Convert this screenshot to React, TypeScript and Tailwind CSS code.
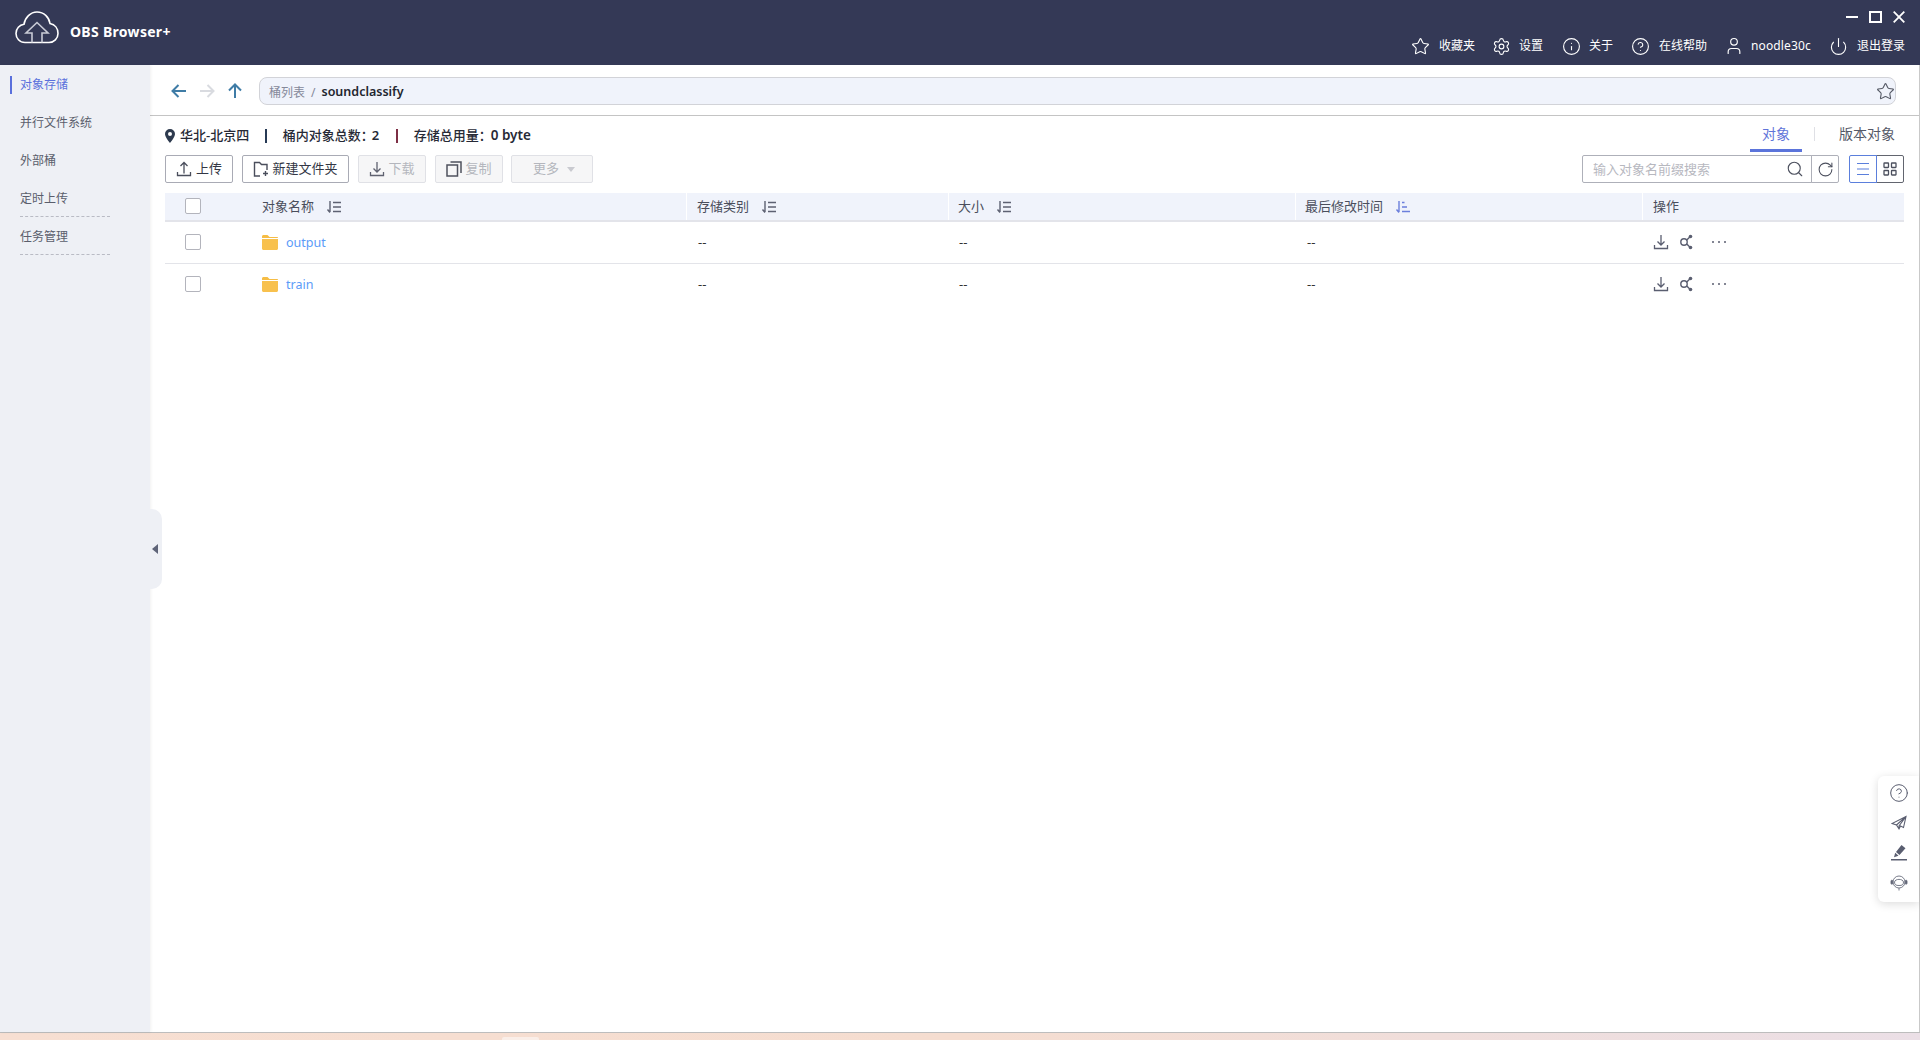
import { Star, Settings, Info, CircleHelp, User, Power, Search, RotateCw } from "lucide-react";

function SortIcon({ active }: { active?: boolean }) {
  const c = active ? "#6b7fdc" : "#5d6172";
  return (
    <svg width="16" height="14" viewBox="0 0 16 14" fill="none" stroke={c} strokeWidth="1.4">
      <path d="M4 1v11M1.5 9.5 4 12.5" />
      {active ? (
        <path d="M7 2.5h2.5M7 7h5M7 11.5h8" />
      ) : (
        <path d="M7 2.5h8M7 7h8M7 11.5h8" />
      )}
    </svg>
  );
}

function Folder() {
  return (
    <svg width="16" height="15" viewBox="0 0 16 15">
      <path d="M0 1.5C0 .7.7 0 1.5 0h4L7.5 2H15c.6 0 1 .4 1 1H0z" fill="#f6bd45" />
      <path d="M0 4h16v9.5c0 .8-.7 1.5-1.5 1.5h-13C.7 15 0 14.300 0 13.500z" fill="#f8c14e" />
    </svg>
  );
}

function DownloadIcon({ size = 16, color = "#5a5e70" }: { size?: number; color?: string }) {
  return (
    <svg width={size} height={size} viewBox="0 0 16 16" fill="none" stroke={color} strokeWidth="1.3">
      <path d="M8 1v10M4.500 7.500 8 11l3.500-3.500M1.500 11v3.500h13V11" />
    </svg>
  );
}

function ShareIcon() {
  return (
    <svg width="14" height="16" viewBox="0 0 14 16" fill="none" stroke="#5a5e70" strokeWidth="1.4">
      <circle cx="5" cy="8" r="3.200" />
      <path d="M7.800 6 11 2.800M7.800 10 11 13.200" />
      <circle cx="11.500" cy="2.500" r="1.800" fill="#5a5e70" stroke="none" />
      <circle cx="11.500" cy="13.500" r="1.800" fill="#5a5e70" stroke="none" />
    </svg>
  );
}

function NavItem({
  icon,
  label,
  className,
  labelClass = "",
}: {
  icon: React.ReactNode;
  label: string;
  className: string;
  labelClass?: string;
}) {
  return (
    <div className={"flex items-center " + className}>
      {icon}
      <span className={"text-[12px] leading-none text-white " + labelClass}>{label}</span>
    </div>
  );
}

function ToolButton({
  icon,
  label,
  className,
  disabled,
}: {
  icon?: React.ReactNode;
  label: string;
  className: string;
  disabled?: boolean;
}) {
  return (
    <button
      className={
        "h-7 flex items-center justify-center gap-[3px] rounded-[2px] border text-[13px] " +
        (disabled
          ? "bg-[#f6f6f7] border-[#e0e1e6] text-[#b4b6bd] "
          : "bg-white border-[#a9abb5] text-[#333745] ") +
        className
      }
    >
      {icon}
      <span>{label}</span>
    </button>
  );
}

const columns = "grid grid-cols-[86px_435px_262px_347px_347px_262px]";

function HeadCell({
  label,
  active,
  className = "border-white pl-[10px]",
}: {
  label: string;
  active?: boolean;
  className?: string;
}) {
  return (
    <div className={"flex items-center border-l text-[13px] text-[#4a4e5c] " + className}>
      <span>{label}</span>
      <span className="ml-3 flex">
        <SortIcon active={active} />
      </span>
    </div>
  );
}

function Row({ name }: { name: string }) {
  return (
    <div className={columns + " h-[42px] last:h-[41px] items-center text-[13px] text-[#333] border-b border-[#e3e4e9] last:border-b-0"}>
      <div className="pl-[20px] pb-[2px]">
        <div className="w-4 h-4 rounded-[2px] border border-[#b3b4bc] bg-white" />
      </div>
      <div className="flex items-center gap-2 pl-[11px]">
        <span className="flex pb-[1px]">
          <Folder />
        </span>
        <a className="pt-[1px] text-[12.500px] text-[#5b9bf8]">{name}</a>
      </div>
      <div className="pl-[12px] pt-[1px]">--</div>
      <div className="pl-[11px] pt-[1px]">--</div>
      <div className="pl-[12px] pt-[1px]">--</div>
      <div className="flex items-center pl-[11px] pb-[1px]">
        <DownloadIcon />
        <span className="ml-[10px] flex">
          <ShareIcon />
        </span>
        <span className="ml-[19px] flex gap-[4px]">
          <i className="w-[2px] h-[2px] bg-[#5a5e70] rounded-full" />
          <i className="w-[2px] h-[2px] bg-[#5a5e70] rounded-full" />
          <i className="w-[2px] h-[2px] bg-[#5a5e70] rounded-full" />
        </span>
      </div>
    </div>
  );
}

export default function App() {
  const sideItems = ["对象存储", "并行文件系统", "外部桶", "定时上传", "任务管理"];
  return (
    <div className="relative w-[1920px] h-[1040px] overflow-hidden flex flex-col bg-white font-['Noto_Sans','Noto_Sans_CJK_SC',sans-serif]">
      {/* title bar */}
      <header className="h-[65px] shrink-0 bg-[#343956] flex items-start justify-between">
        <div className="flex items-start pl-[15px] pt-[11px]">
          <svg width="44" height="33" viewBox="0 0 44 33" fill="none" stroke="#fff" strokeWidth="1.600">
            <path d="M10 31.500C4.500 31.500 1 27 1 22.500 1 17.500 4.500 14 9 13.300 10 6.500 15.500 1 22 1c7 0 12 5 13 11.500 5 1 8 5 8 10 0 5-4 9-9 9z" />
            <path d="M17 31.500V22h-6l11-10.500L33 22h-6v9.500" stroke="#c9cbd6" />
          </svg>
          <span className="ml-[11px] mt-[14px] text-[14px] font-bold tracking-[0.3px] text-white leading-none">OBS Browser+</span>
        </div>
        <div className="flex flex-col items-end pr-[15px]">
          <div className="flex items-center h-[34px] gap-[11px]">
            <i className="w-3 h-[2px] bg-white" />
            <i className="w-[13px] h-[12px] border-2 border-white" />
            <svg width="12" height="12" viewBox="0 0 12 12" fill="none" stroke="#fff" strokeWidth="1.800">
              <path d="M.7.7l10.600 10.600M11.300.7.7 11.300" />
            </svg>
          </div>
          <div className="flex items-center gap-[18px] h-6">
            <NavItem className="gap-[9px]" icon={<Star className="w-[19px] h-[19px] text-white" strokeWidth={1.4} />} label="收藏夹" />
            <NavItem className="ml-[-1px] gap-[8px]" icon={<Settings className="w-[19px] h-[19px] text-white" strokeWidth={1.4} />} label="设置" />
            <NavItem className="ml-px gap-[8px]" icon={<Info className="w-[19px] h-[19px] text-white" strokeWidth={1.4} />} label="关于" />
            <NavItem className="gap-[9px]" icon={<CircleHelp className="w-[19px] h-[19px] text-white" strokeWidth={1.4} />} label="在线帮助" />
            <NavItem
              className="ml-[-1px] gap-[8px]"
              labelClass="tracking-[0.15px]"
              icon={<User className="w-[20px] h-[20px] text-white mr-[-1px]" strokeWidth={1.4} />}
              label="noodle30c"
            />
            <NavItem className="gap-[9px]" icon={<Power className="w-[19px] h-[19px] text-white" strokeWidth={1.4} />} label="退出登录" />
          </div>
        </div>
      </header>

      <div className="flex flex-1 min-h-0 border-b border-[#bdbdbd]">
        {/* sidebar */}
        <aside className="w-[150px] shrink-0 bg-[#eef0f5] pt-[1px] shadow-[1px_0_3px_rgba(0,0,0,0.06)] z-10">
          {sideItems.map((item, i) => (
            <div key={item} className="relative h-[38px] flex items-center pl-5 text-[12px] text-[#5a5e6c]">
              {i === 0 && <i className="absolute left-[10px] top-[10px] w-[2px] h-[18px] bg-[#5a70dc]" />}
              <span className={i === 0 ? "text-[#5a70dc]" : ""}>{item}</span>
              {i > 2 && <i className="absolute left-5 bottom-[1px] w-[90px] border-b border-dashed border-[#b9bbc4]" />}
            </div>
          ))}
        </aside>

        <main className="flex-1 min-w-0 border-r border-[#c9c9c9]">
          {/* address row */}
          <div className="h-[51px] border-b border-[#c4c4c4] flex items-start pt-[12px]">
            <div className="flex items-center h-7 pl-[21px]">
              <svg width="16" height="14" viewBox="0 0 16 14" fill="none" stroke="#3f7ca6" strokeWidth="2">
                <path d="M15 7H2M7.500 1 1.500 7l6 6" />
              </svg>
              <svg className="ml-[12px]" width="16" height="14" viewBox="0 0 16 14" fill="none" stroke="#d9dbe0" strokeWidth="2">
                <path d="M1 7h13M8.500 1l6 6-6 6" />
              </svg>
              <svg className="ml-[13px]" width="14" height="16" viewBox="0 0 14 16" fill="none" stroke="#3f7ca6" strokeWidth="2">
                <path d="M7 15V2M1 7.500l6-6 6 6" />
              </svg>
            </div>
            <div className="ml-[17px] w-[1637px] h-7 rounded-[8px] border border-[#d2d3d8] bg-[#f0f3fb] flex items-center pl-[9px] text-[12px]">
              <span className="pt-[3px] text-[#85899a]">桶列表</span>
              <span className="pt-[3px] mx-[6px] text-[#85899a]">/</span>
              <span className="pt-[3px] text-[12.500px] font-semibold text-[#23262f]">soundclassify</span>
              <Star className="ml-auto w-[19px] h-[19px] text-[#565a66]" strokeWidth={1.4} />
            </div>
          </div>

          {/* bucket info + tabs */}
          <div className="h-[39px] flex items-center pl-[15px] pr-[24px] text-[13px] font-medium text-[#272a36]">
            <svg width="10" height="14" viewBox="0 0 10 14">
              <path fillRule="evenodd" d="M5 0a5 5 0 0 1 5 5c0 3-5 9-5 9S0 8 0 5a5 5 0 0 1 5-5zm0 3a2 2 0 1 0 0 4 2 2 0 0 0 0-4z" fill="#2d3a4e" />
            </svg>
            <span className="ml-[5px]">华北-北京四</span>
            <i className="ml-[16px] w-[1.500px] h-[14px] bg-[#273a55]" />
            <span className="ml-[16px]">桶内对象总数：</span>
            <span className="ml-[-2px] font-semibold">2</span>
            <i className="ml-[17px] w-[1.500px] h-[14px] bg-[#7d2f45]" />
            <span className="ml-[16px]">存储总用量：</span>
            <span className="ml-[-1px] text-[13.500px] font-semibold">0 byte</span>
            <div className="ml-auto flex items-center h-full font-normal text-[14px]">
              <div className="relative w-[52px] h-full flex items-center justify-center pb-[4px] text-[#5f74d9]">
                对象
                <i className="absolute left-0 right-0 bottom-[3px] h-[3px] bg-[#5b74db]" />
              </div>
              <i className="ml-[12px] mb-[3px] w-px h-[14px] bg-[#dfe0e5]" />
              <span className="ml-[24px] pb-[4px] text-[#555968]">版本对象</span>
            </div>
          </div>

          {/* toolbar */}
          <div className="h-7 flex items-center pl-[15px] pr-[15px]">
            <ToolButton
              className="w-[68px]"
              label="上传"
              icon={
                <svg width="16" height="16" viewBox="0 0 16 16" fill="none" stroke="#4a4e5c" strokeWidth="1.300" className="mr-[1px]">
                  <path d="M8 12.500V2M4.500 5 8 1.500 11.500 5M1.500 11v3.500h13V11" />
                </svg>
              }
            />
            <ToolButton
              className="ml-[9px] w-[107px]"
              label="新建文件夹"
              icon={
                <svg width="16" height="16" viewBox="0 0 16 16" fill="none" stroke="#4a4e5c" strokeWidth="1.400">
                  <path d="M7 15H1.500V1.500h5l2 2h5.500V9M10 12.500h5M12.500 10v5" />
                </svg>
              }
            />
            <ToolButton className="ml-[9px] w-[68px]" disabled label="下载" icon={<DownloadIcon color="#5f6270" />} />
            <ToolButton
              className="ml-[9px] w-[68px]"
              disabled
              label="复制"
              icon={
                <svg width="16" height="16" viewBox="0 0 16 16" fill="none" stroke="#4f525e" strokeWidth="1.500">
                  <path d="M1 4h10.500v11H1zM4.500 1H15v11" />
                </svg>
              }
            />
            <button className="ml-[8px] w-[82px] h-7 flex items-center justify-center gap-[8px] pl-[4px] rounded-[2px] border border-[#e0e1e6] bg-[#f6f6f7] text-[13px] text-[#b4b6bd]">
              更多
              <i className="w-0 h-0 border-x-[4px] border-x-transparent border-t-[5px] border-t-[#c9cad0]" />
            </button>

            <div className="ml-auto flex">
              <div className="w-[230px] h-7 rounded-l-[2px] border border-[#aeb0b9] flex items-center pl-[10px] pr-[7px] text-[13px] text-[#b7b8bf]">
                <span className="pt-[2px]">输入对象名前缀搜索</span>
                <Search className="ml-auto w-[18px] h-[18px] text-[#4c505e]" strokeWidth={1.500} />
              </div>
              <div className="w-7 h-7 ml-[-1px] rounded-r-[2px] border border-[#aeb0b9] flex items-center justify-center">
                <RotateCw className="w-[17px] h-[17px] text-[#4c505e]" strokeWidth={1.500} />
              </div>
              <div className="ml-[10px] w-7 h-7 rounded-l-[2px] border border-[#5b7fdc] flex items-center justify-center z-10">
                <svg width="14" height="14" viewBox="0 0 14 14" fill="none" stroke="#5b7fdc" strokeWidth="1.200">
                  <path d="M1 1.500h12M1 7h12M1 12.500h12" />
                </svg>
              </div>
              <div className="ml-[-1px] w-7 h-7 rounded-r-[2px] border border-[#62656f] flex items-center justify-center">
                <svg width="14" height="14" viewBox="0 0 14 14" fill="none" stroke="#4c505e" strokeWidth="1.300">
                  <rect x="1" y="1" width="4.500" height="4.500" rx="0.500" />
                  <rect x="8.500" y="1" width="4.500" height="4.500" rx="0.500" />
                  <rect x="1" y="8.500" width="4.500" height="4.500" rx="0.500" />
                  <rect x="8.500" y="8.500" width="4.500" height="4.500" rx="0.500" />
                </svg>
              </div>
            </div>
          </div>

          {/* object table */}
          <div className="mt-[10px] ml-[15px] w-[1739px]">
            <div className={columns + " h-[29px] bg-[#f0f3fb] border-b-2 border-[#e3e4ea]"}>
              <div className="flex items-center pl-[20px] pb-[2px]">
                <div className="w-4 h-4 rounded-[2px] border border-[#b3b4bc] bg-white" />
              </div>
              <HeadCell label="对象名称" className="border-transparent pl-[10px]" />
              <HeadCell label="存储类别" />
              <HeadCell label="大小" className="border-white pl-[9px]" />
              <HeadCell label="最后修改时间" active className="border-white pl-[9px]" />
              <div className="flex items-center border-l border-white pl-[10px] text-[13px] text-[#4a4e5c]">操作</div>
            </div>
            <Row name="output" />
            <Row name="train" />
          </div>
        </main>
      </div>

      {/* desktop peeking through below the window */}
      <div className="relative h-[7px] shrink-0 bg-gradient-to-r from-[#f7dfd2] via-[#f5ddd0] to-[#ebdfe6]">
        <i className="absolute left-[502px] top-[4px] w-[37px] h-[3px] rounded-t-[2px] bg-[#faeee8]" />
      </div>

      {/* sidebar collapse handle */}
      <div className="absolute left-[150px] top-[509px] w-[12px] h-[80px] rounded-r-[10px] bg-[#eef0f5] flex items-center pl-[2px] z-20">
        <i className="w-0 h-0 border-y-[5px] border-y-transparent border-r-[6px] border-r-[#5e6478]" />
      </div>

      {/* floating help rail */}
      <div className="absolute left-[1878px] top-[776px] w-[41px] h-[126px] rounded-l-[6px] bg-white shadow-[0_2px_10px_rgba(0,0,0,0.14)] flex flex-col items-center pt-[7px]">
        <CircleHelp className="w-[20px] h-[20px] text-[#5a5e70]" strokeWidth={1.200} />
        <svg width="16" height="16" viewBox="0 0 16 16" fill="none" stroke="#5a5e70" strokeWidth="1.100" className="mt-[12px]">
          <path d="M15 1.500 1 8.500l4.500 1.500 2.500 4 1.500-3 3 1.500zM15 1.500 5.500 10M8 14l0-3 7-9.500" />
        </svg>
        <svg width="16" height="17" viewBox="0 0 16 17" fill="#5a5e70" className="mt-[13px]">
          <path d="m10.500 1 4 3.200-6 6.800-3.500-3zM4.200 8.700l3.300 3-4.500 1.500zM0 15h16v1.500H0z" />
        </svg>
        <svg width="18" height="18" viewBox="0 0 18 18" fill="none" stroke="#6a6e7e" strokeWidth="0.900" className="mt-[13px]">
          <circle cx="9" cy="8" r="6" />
          <path d="M4.500 8C5 4.500 13 4.500 13.500 8c0 3-1.500 3.500-4.500 3.500S4.500 11 4.500 8zM9 14v2.500" />
          <rect x="1" y="6.200" width="1.800" height="4" rx="0.900" fill="#5a5e70" />
          <rect x="15.200" y="6.200" width="1.800" height="4" rx="0.900" fill="#5a5e70" />
        </svg>
      </div>
    </div>
  );
}
